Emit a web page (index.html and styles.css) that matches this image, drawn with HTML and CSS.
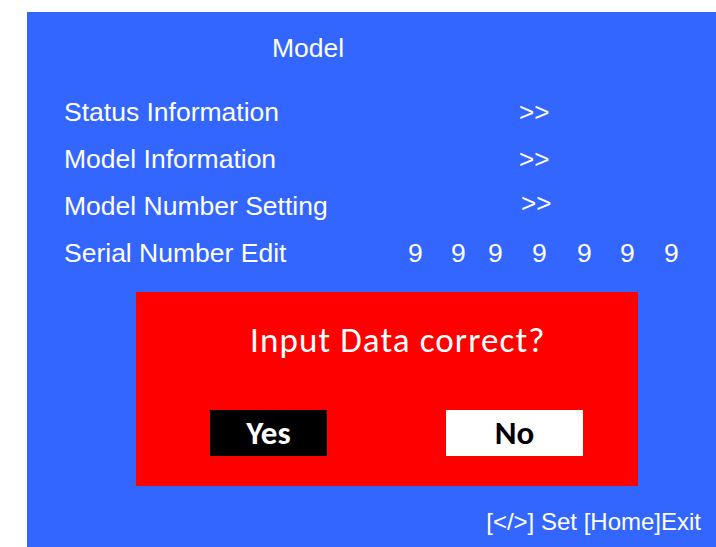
FILE: index.html
```html
<!DOCTYPE html>
<html>
<head>
<meta charset="utf-8">
<title>Model</title>
<link rel="stylesheet" href="styles.css">
</head>
<body>
<div class="osd">
	<h1 class="osd-title">Model</h1>
	<ul class="menu">
		<li class="menu-row"><span class="label">Status Information</span><span class="arrow">&gt;&gt;</span></li>
		<li class="menu-row"><span class="label">Model Information</span><span class="arrow">&gt;&gt;</span></li>
		<li class="menu-row"><span class="label">Model Number Setting</span><span class="arrow arrow-shift">&gt;&gt;</span></li>
		<li class="menu-row">
			<span class="label">Serial Number Edit</span>
			<span class="digits">
				<span class="d d1">9</span><span class="d d2">9</span><span class="d d3">9</span><span class="d d4">9</span><span class="d d5">9</span><span class="d d6">9</span><span class="d d7">9</span>
			</span>
		</li>
	</ul>
	<div class="dialog">
		<p class="question">Input Data correct?</p>
		<div class="buttons">
			<span class="btn btn-yes">Yes</span>
			<span class="btn btn-no">No</span>
		</div>
	</div>
	<p class="hint">[&lt;/&gt;] Set [Home]Exit</p>
</div>
</body>
</html>
```

FILE: styles.css
```css
html, body{
	margin: 0;
	padding: 0;
	background: #fff;
}
body{
	font-family: 'Liberation Sans', Arial, sans-serif;
	color: #fff;
	overflow: hidden;
}
.osd{
	margin: 12px 0 0 27px;
	height: 535px;
	background: #3366ff;
	padding-top: 21px;
	box-sizing: border-box;
	display: flex;
	flex-direction: column;
}
.osd-title{
	margin: 0;
	padding-left: 245px;
	font-size: 26.5px;
	font-weight: normal;
	line-height: 30px;
}
.menu{
	list-style: none;
	margin: 26px 0 0;
	padding: 0 0 0 37px;
}
.menu-row{
	display: flex;
	height: 47px;
	line-height: 47px;
	font-size: 26.5px;
}
.label{
	width: 344px;
}
.arrow{
	margin-left: 111px;
	font-size: 26px;
}
.arrow-shift{
	margin-left: 113px;
	line-height: 40px;
}
.digits{
	display: flex;
}
.d{
	width: 14px;
}
.d2{ margin-left: 29px; }
.d3{ margin-left: 23px; }
.d4{ margin-left: 30px; }
.d5{ margin-left: 31px; }
.d6{ margin-left: 29px; }
.d7{ margin-left: 30px; }
.dialog{
	margin: 15px 0 0 109px;
	width: 502px;
	height: 194px;
	background: #ff0000;
	font-family: Carlito, Lato, sans-serif;
}
.question{
	margin: 0;
	padding: 26px 0 0 114px;
	font-size: 35px;
	letter-spacing: 1.1px;
	line-height: 44px;
}
.buttons{
	display: flex;
	margin-top: 48px;
	padding-left: 74px;
}
.btn{
	display: flex;
	align-items: center;
	justify-content: center;
	height: 46px;
	font-size: 33px;
	font-weight: bold;
}
.btn-yes{
	width: 117px;
	background: #000;
	color: #fff;
}
.btn-no{
	width: 137px;
	margin-left: 119px;
	background: #fff;
	color: #000;
}
.hint{
	margin: 22px 0 0;
	padding-right: 15px;
	text-align: right;
	font-size: 24px;
	line-height: 28px;
}
```
